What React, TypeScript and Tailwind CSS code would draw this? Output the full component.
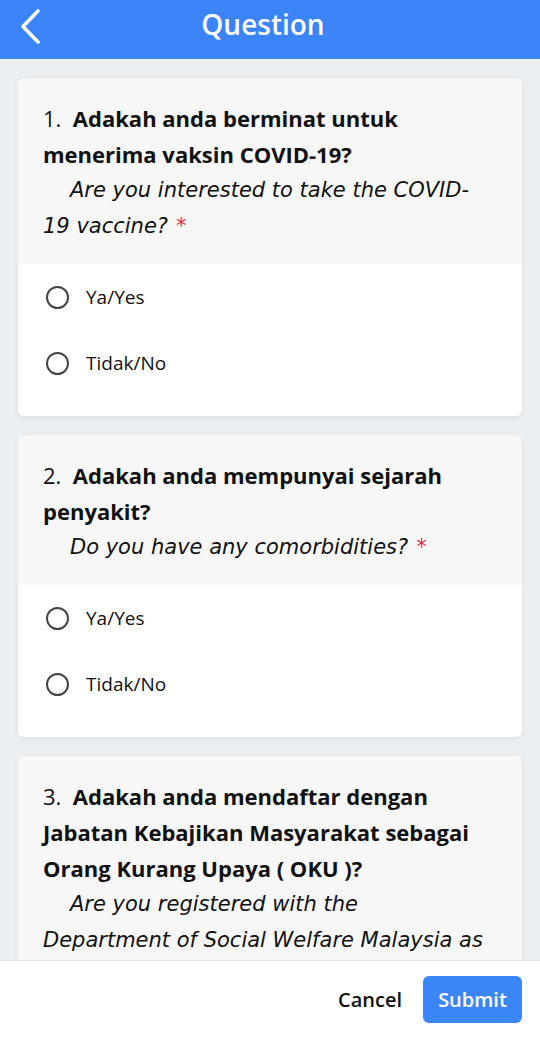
type Question = {
  no: number;
  ms: string;
  en: string;
  required?: boolean;
};

const questions: Question[] = [
  {
    no: 1,
    ms: "Adakah anda berminat untuk menerima vaksin COVID-19?",
    en: "Are you interested to take the COVID-\u200B19 vaccine?",
    required: true,
  },
  {
    no: 2,
    ms: "Adakah anda mempunyai sejarah penyakit?",
    en: "Do you have any comorbidities?",
    required: true,
  },
  {
    no: 3,
    ms: "Adakah anda mendaftar dengan Jabatan Kebajikan Masyarakat sebagai Orang Kurang Upaya ( OKU )?",
    en: "Are you registered with the Department of Social Welfare Malaysia as a person with disabilities ( OKU )?",
    required: true,
  },
];

const options = ["Ya/Yes", "Tidak/No"];

function QuestionCard({ q }: { q: Question }) {
  return (
    <div className="mx-[18px] mb-[19px] rounded-md overflow-hidden shadow-[0_2px_6px_rgba(0,0,0,0.06)] bg-white shrink-0">
      <div className="bg-[#f7f7f7] pl-[25px] pr-[36px] pt-[22px] pb-[20px] text-[22px] leading-[36px] text-[#111]">
        <p>
          <span>{q.no}.&nbsp; </span>
          <span className="font-bold">{q.ms}</span>
        </p>
        <p className="italic indent-[27px] text-[21px] font-['DejaVu_Sans',sans-serif]">
          {q.en}
          {q.required && <span className="text-[#e0294a] not-italic ml-2">*</span>}
        </p>
      </div>
      <div className="pb-[20px]">
        {options.map((opt) => (
          <label key={opt} className="flex items-center h-[66px] px-[28px] gap-[17px] cursor-pointer">
            <span className="w-[23px] h-[23px] rounded-full border-[2.5px] border-[#454545] shrink-0" />
            <span className="text-[19px] text-[#111]">{opt}</span>
          </label>
        ))}
      </div>
    </div>
  );
}

export default function App() {
  return (
    <div
      className="h-[1043px] w-full flex flex-col bg-[#eceff1] overflow-hidden"
      style={{ fontFamily: "'Open Sans', 'Noto Sans', sans-serif" }}
    >
      <header className="h-[59px] bg-[#3a84f7] flex items-center relative shrink-0">
        <button className="absolute left-[18px] top-[8px] text-white">
          <svg width="26" height="38" viewBox="0 0 26 38" fill="none">
            <polyline
              points="20,3 5,18.5 20,34"
              stroke="white"
              strokeWidth="3.6"
              strokeLinecap="round"
              strokeLinejoin="round"
            />
          </svg>
        </button>
        <h1 className="w-full text-center text-white text-[28px] font-semibold pb-[12px] pr-[14px]">
          Question
        </h1>
      </header>

      <main className="flex-1 overflow-hidden pt-[19px] flex flex-col">
        {questions.map((q) => (
          <QuestionCard key={q.no} q={q} />
        ))}
      </main>

      <footer className="h-[83px] bg-white border-t border-[#e3e3e3] flex items-start justify-end gap-[21px] px-[18px] pt-[15px] shrink-0">
        <button className="h-[47px] text-[20px] font-semibold text-[#111]">Cancel</button>
        <button className="w-[99px] h-[47px] rounded-md bg-[#3b86f6] text-white text-[20px] font-semibold">
          Submit
        </button>
      </footer>
    </div>
  );
}
